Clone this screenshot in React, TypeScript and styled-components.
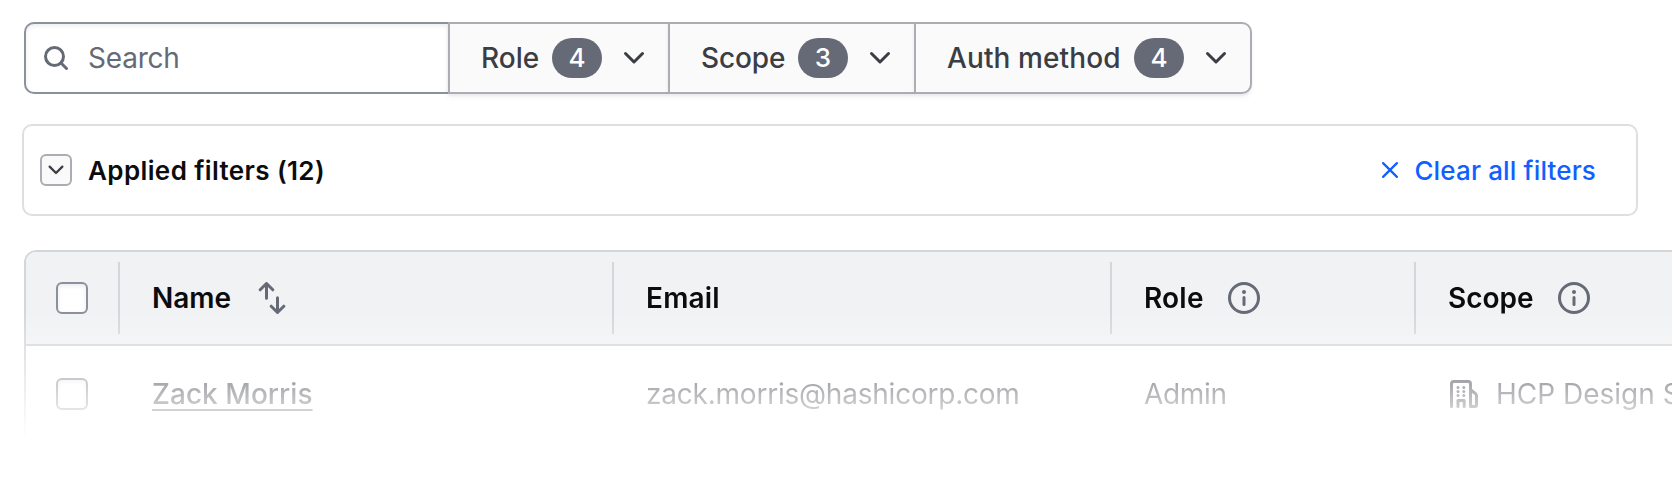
import React from "react";
import styled, { createGlobalStyle } from "styled-components";

const GlobalStyle = createGlobalStyle`
  * { box-sizing: border-box; }
  html, body { margin: 0; background: #fff; overflow: hidden; }
  body { font-family: Inter, "Liberation Sans", sans-serif; font-size: 28px; line-height: 36px; color: #3b3d45; }
  button { font: inherit; color: inherit; margin: 0; }
`;

const Page = styled.main`
  height: 494px;
  padding: 22px 0 0 22px;
  overflow: hidden;
`;

const Toolbar = styled.div`
  display: flex;
  height: 72px;
  margin-left: 2px;
`;

const SearchField = styled.label`
  display: flex;
  align-items: center;
  gap: 16px;
  width: 424px;
  padding-left: 14px;
  border: 2px solid #8c909c;
  border-right: 0;
  border-radius: 10px 0 0 10px;
  box-shadow: inset 0 2px 4px rgba(101, 106, 118, 0.12);
`;

const SearchInput = styled.input`
  flex: 1;
  min-width: 0;
  padding: 0;
  border: 0;
  outline: 0;
  background: none;
  font: inherit;
  letter-spacing: -0.2px;
  &::placeholder { color: #656a76; opacity: 1; }
`;

const FilterButton = styled.button<{ $width: number; $last?: boolean }>`
  display: flex;
  align-items: center;
  width: ${(p) => p.$width}px;
  padding: 0 18px 0 31px;
  border: 2px solid #acadb3;
  border-right-width: ${(p) => (p.$last ? 2 : 0)}px;
  border-radius: ${(p) => (p.$last ? "0 10px 10px 0" : "0")};
  background: #fafafa;
  box-shadow: 0 2px 2px rgba(101, 106, 118, 0.08), 0 4px 4px rgba(101, 106, 118, 0.05);
`;

const Label = styled.span<{ $spacing?: number; $weight?: number }>`
  font-weight: ${(p) => p.$weight ?? 400};
  letter-spacing: ${(p) => p.$spacing ?? 0}px;
  white-space: nowrap;
`;

const Count = styled.span`
  display: flex;
  align-items: center;
  justify-content: center;
  width: 50px;
  height: 40px;
  margin: 0 16px 0 auto;
  border-radius: 20px;
  background: #656a76;
  color: #fff;
  font-size: 26px;
  font-weight: 500;
`;

const AppliedPanel = styled.section`
  display: flex;
  align-items: center;
  width: 1616px;
  height: 92px;
  margin-top: 30px;
  padding: 0 40px 0 16px;
  border: 2px solid #dedfe3;
  border-radius: 10px;
`;

const Toggle = styled.button`
  display: grid;
  place-items: center;
  width: 32px;
  height: 32px;
  margin-right: 16px;
  padding: 0;
  border: 2px solid #acadb3;
  border-radius: 6px;
  background: #fafafa;
`;

const PanelTitle = styled.h2`
  margin: 0;
  padding-top: 2px;
  color: #0c0c0e;
  font-size: 26px;
  font-weight: 600;
  letter-spacing: 0.38px;
`;

const ClearButton = styled.button`
  display: flex;
  align-items: center;
  gap: 12px;
  margin-left: auto;
  padding: 0;
  border: 0;
  background: none;
  color: #1060ff;
  font-size: 26px;
  font-weight: 500;
`;

const ClearLabel = styled(Label)`
  padding-top: 2px;
`;

const TableFrame = styled.div`
  width: 1800px;
  height: 220px;
  margin: 34px 0 0 2px;
  border: 2px solid #d5d6da;
  border-radius: 12px;
  overflow: hidden;
  mask-image: linear-gradient(to bottom, #000 62px, transparent 190px);
`;

const Row = styled.div<{ $head?: boolean }>`
  display: grid;
  grid-template-columns: 94px 494px 498px 304px 1fr;
  align-items: center;
  height: ${(p) => (p.$head ? 94 : 98)}px;
  background: ${(p) => (p.$head ? "#f1f2f4" : "#fff")};
  border-bottom: 2px solid #d5d6da;
  color: ${(p) => (p.$head ? "#0c0c0e" : "#3b3d45")};
`;

const Cell = styled.div<{ $divided?: boolean }>`
  display: flex;
  align-items: center;
  height: 72px;
  padding-left: 32px;
  border-right: 2px solid ${(p) => (p.$divided ? "#d5d6da" : "transparent")};
`;

const CheckCell = styled(Cell)`
  padding-left: 30px;
`;

const Checkbox = styled.input`
  appearance: none;
  width: 32px;
  height: 32px;
  margin: 0;
  border: 2px solid #8c909c;
  border-radius: 6px;
  background: #fff;
  box-shadow: inset 0 2px 4px rgba(101, 106, 118, 0.14);
`;

const NameLink = styled.a`
  color: #3b3d45;
  font-weight: 500;
  letter-spacing: 0.04px;
  text-decoration: underline;
  text-decoration-thickness: 2px;
  text-underline-offset: 5px;
`;

const ScopeValue = styled.div`
  display: flex;
  align-items: center;
  gap: 16px;
`;

const Icon = styled.svg<{ $size?: number; $color?: string; $gap?: number }>`
  flex: none;
  width: ${(p) => p.$size ?? 32}px;
  height: ${(p) => p.$size ?? 32}px;
  margin-left: ${(p) => p.$gap ?? 0}px;
  color: ${(p) => p.$color ?? "#3b3d45"};
  fill: none;
  stroke: currentColor;
  stroke-width: 1.5;
  stroke-linecap: round;
  stroke-linejoin: round;
`;

const Chevron = ({ size }: { size?: number }) => (
  <Icon viewBox="0 0 16 16" $size={size}><path d="M3.75 5.75 8 10l4.25-4.25" /></Icon>
);

const Info = ({ gap }: { gap: number }) => (
  <Icon viewBox="0 0 16 16" $color="#656a76" $gap={gap}>
    <circle cx="8" cy="8" r="7.25" />
    <path d="M8 7.75v3.5" />
    <circle cx="8" cy="5" r="1" fill="currentColor" stroke="none" />
  </Icon>
);

const filters = [
  { label: "Role", count: 4, width: 220, spacing: 0 },
  { label: "Scope", count: 3, width: 246, spacing: -0.1 },
  { label: "Auth method", count: 4, width: 338, spacing: 0.1 },
];

export default function App() {
  return (
    <Page>
      <GlobalStyle />
      <Toolbar>
        <SearchField>
          <Icon viewBox="0 0 16 16" $color="#656a76">
            <circle cx="7.25" cy="7.25" r="4.5" />
            <path d="m10.5 10.5 2.75 2.75" />
          </Icon>
          <SearchInput placeholder="Search" />
        </SearchField>
        {filters.map((f, i) => (
          <FilterButton key={f.label} $width={f.width} $last={i === filters.length - 1}>
            <Label $spacing={f.spacing} $weight={500}>{f.label}</Label>
            <Count>{f.count}</Count>
            <Chevron />
          </FilterButton>
        ))}
      </Toolbar>
      <AppliedPanel>
        <Toggle aria-label="Toggle applied filters"><Chevron size={24} /></Toggle>
        <PanelTitle>Applied filters (12)</PanelTitle>
        <ClearButton>
          <Icon viewBox="0 0 16 16" $size={24} $color="#1060ff"><path d="m3.4 3.4 9.2 9.2M12.6 3.4l-9.2 9.2" /></Icon>
          <ClearLabel $weight={500} $spacing={0.15}>Clear all filters</ClearLabel>
        </ClearButton>
      </AppliedPanel>
      <TableFrame>
        <Row $head>
          <CheckCell $divided><Checkbox type="checkbox" aria-label="Select all" /></CheckCell>
          <Cell $divided>
            <Label $weight={600}>Name</Label>
            <Icon viewBox="0 0 16 16" $color="#656a76" $gap={25}>
              <path d="M5.25 8.1V.75M2.1 3.9 5.25.75 8.4 3.9M10.75 7.9v7.35M7.6 12.1l3.15 3.15 3.15-3.15" />
            </Icon>
          </Cell>
          <Cell $divided><Label $weight={600} $spacing={0.2}>Email</Label></Cell>
          <Cell $divided><Label $weight={600} $spacing={0.2}>Role</Label><Info gap={24} /></Cell>
          <Cell><Label $weight={600}>Scope</Label><Info gap={24} /></Cell>
        </Row>
        <Row>
          <CheckCell><Checkbox type="checkbox" aria-label="Select Zack Morris" /></CheckCell>
          <Cell><NameLink>Zack Morris</NameLink></Cell>
          <Cell><Label $spacing={-0.22}>zack.morris@hashicorp.com</Label></Cell>
          <Cell><Label $spacing={-0.3}>Admin</Label></Cell>
          <Cell>
            <ScopeValue>
              <Icon viewBox="0 0 16 16">
                <path d="M1.75 14.25V3c0-.7.55-1.25 1.25-1.25h7c.7 0 1.25.55 1.25 1.25v11.25h2.25c.4 0 .75-.35.75-.75V8.9c0-.4-.15-.75-.45-1L11.25 5.9" />
                <path d="M5 14.25v-3h3.1v3" />
                <path d="M5 4.7h0M7.9 4.7h0M5 6.8h0M7.9 6.8h0M5 8.8h0M7.9 8.8h0" />
              </Icon>
              <Label>HCP Design System</Label>
            </ScopeValue>
          </Cell>
        </Row>
      </TableFrame>
    </Page>
  );
}
